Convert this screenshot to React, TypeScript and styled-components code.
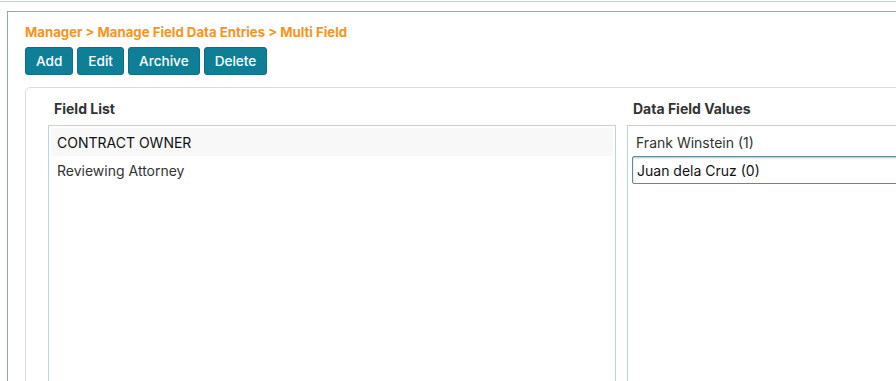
import * as React from "react";
import styled, { createGlobalStyle } from "styled-components";

const GlobalStyle = createGlobalStyle`
  html, body {
    margin: 0;
    padding: 0;
    background: #fff;
    overflow: hidden;
  }
  body {
    font-family: Inter, "Noto Sans", sans-serif;
    color: #222;
  }
`;

const TopRule = styled.div`
  height: 1px;
  margin-top: 1px;
  background-color: #a7d8dc;
`;

const Page = styled.div`
  margin: 9px 0 0 7px;
  width: 1400px;
  height: 420px;
  border-top: 1px solid #8ca4d0;
  border-left: 1px solid #8ca4d0;
  padding: 12px 0 0 17px;
  box-sizing: border-box;
`;

const Breadcrumb = styled.div`
  font-size: 13.2px;
  font-weight: 700;
  line-height: 17px;
  color: #f7941e;
`;

const Toolbar = styled.div`
  display: flex;
  gap: 4px;
  margin-top: 6px;
`;

const Button = styled.button`
  height: 28px;
  padding: 0 10px;
  border: 1px solid #0b6f85;
  border-radius: 3px;
  background-color: #0f7f98;
  color: #fff;
  font-family: Inter, "Noto Sans", sans-serif;
  font-size: 13.6px;
  font-weight: 500;
  cursor: pointer;
`;

const Card = styled.div`
  margin-top: 12px;
  width: 1300px;
  height: 320px;
  border: 1px solid #dcdcdc;
  border-radius: 5px;
  padding: 13px 22px 0 22px;
  box-sizing: border-box;
  display: grid;
  grid-template-columns: 568px 568px;
  column-gap: 11px;
`;

const Column = styled.div`
  display: flex;
  flex-direction: column;
`;

const Heading = styled.div`
  font-size: 14px;
  font-weight: 700;
  color: #333;
  line-height: 16px;
  padding: 0 6px;
  margin-bottom: 8px;
`;

const ListBox = styled.div`
  height: 300px;
  border: 1px solid #b5d7e8;
  padding: 2px;
  display: flex;
  flex-direction: column;
`;

const ListItem = styled.div<{ $shaded?: boolean }>`
  height: 28px;
  padding: 0 6px;
  display: flex;
  align-items: center;
  font-size: 14px;
  color: ${(p) => (p.$shaded ? "#111" : "#333")};
  background-color: ${(p) => (p.$shaded ? "#f8f8f8" : "transparent")};
`;

const SelectedItem = styled.div`
  height: 26px;
  margin: 0 0 0 2px;
  padding: 0 4px;
  display: flex;
  align-items: center;
  font-size: 14px;
  color: #111;
  border: 1px solid #5f8a96;
  border-radius: 2px;
  box-shadow: inset 0 1px 2px rgba(0, 0, 0, 0.25);
`;

const fields = ["CONTRACT OWNER", "Reviewing Attorney"];

export default function App() {
  return (
    <>
      <GlobalStyle />
      <TopRule />
      <Page>
        <Breadcrumb>Manager &gt; Manage Field Data Entries &gt; Multi Field</Breadcrumb>
        <Toolbar>
          <Button>Add</Button>
          <Button>Edit</Button>
          <Button>Archive</Button>
          <Button>Delete</Button>
        </Toolbar>
        <Card>
          <Column>
            <Heading>Field List</Heading>
            <ListBox>
              {fields.map((f, i) => (
                <ListItem key={f} $shaded={i === 0}>
                  {f}
                </ListItem>
              ))}
            </ListBox>
          </Column>
          <Column>
            <Heading>Data Field Values</Heading>
            <ListBox>
              <ListItem>Frank Winstein (1)</ListItem>
              <SelectedItem>Juan dela Cruz (0)</SelectedItem>
            </ListBox>
          </Column>
        </Card>
      </Page>
    </>
  );
}
